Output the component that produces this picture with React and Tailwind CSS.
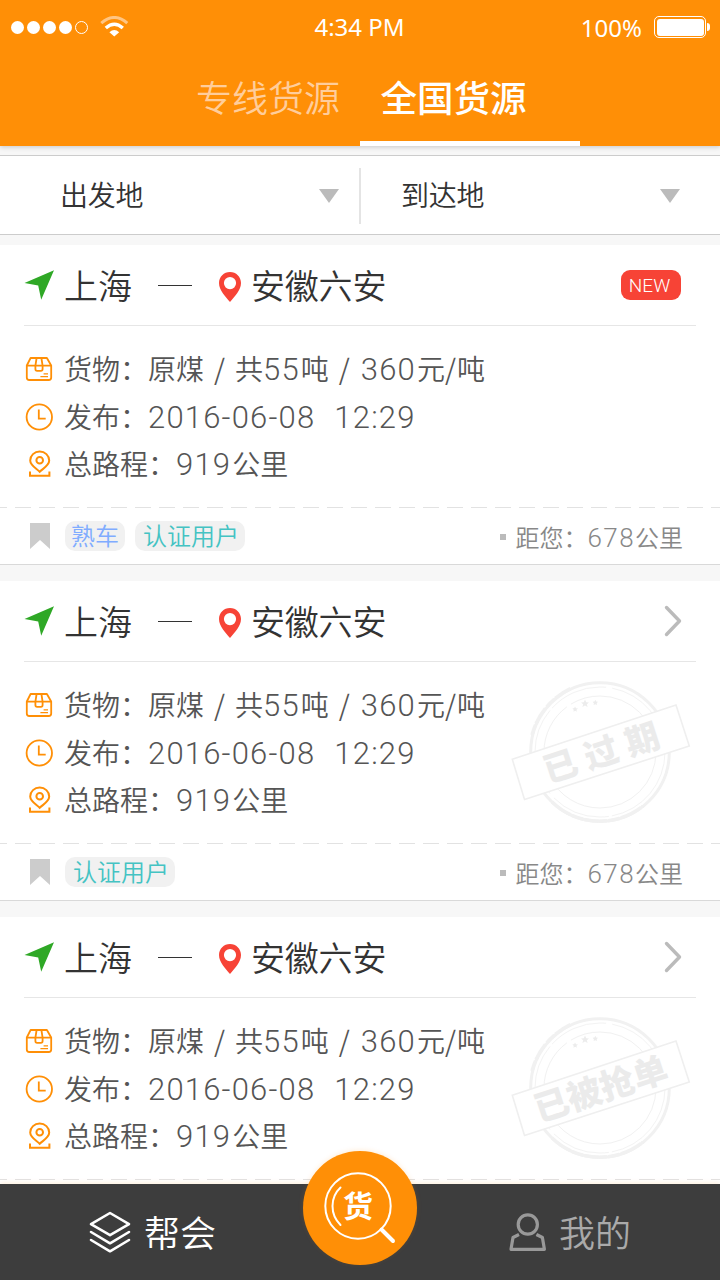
import React from 'react';

const ORDERS = [
  { id: 1, isNew: true, familiar: true, stamp: null, distance: '678' },
  { id: 2, isNew: false, familiar: false, stamp: '已过期', distance: '678' },
  { id: 3, isNew: false, familiar: false, stamp: '已被抢单', distance: null },
];

function StatusBar() {
  return (
    <div className="flex h-[54px] items-center font-['Noto_Sans',sans-serif] text-[24px] leading-none">
      <div className="flex flex-1 items-center pl-[11px]">
        <div className="flex gap-[3px]">
          {[0, 1, 2, 3].map(i => (
            <span key={i} className="h-[13px] w-[13px] rounded-full bg-white" />
          ))}
          <span className="h-[13px] w-[13px] rounded-full border border-white" />
        </div>
        <svg className="ml-3 h-[22px] w-[30px]" viewBox="0 0 30 22" fill="none">
          <path d="M1.3 7.2Q14.3-4.2 27.3 7.2" stroke="#ffc583" strokeWidth="3" />
          <path d="M5.8 12Q14.3 4.4 22.8 12" stroke="#fff" strokeWidth="3.4" />
          <path d="M9.4 16.2Q14.3 12 19.2 16.2L14.3 20.5Z" fill="#fff" />
        </svg>
      </div>
      <span className="-ml-0.5 font-[380]">4:34 PM</span>
      <div className="flex flex-1 items-center justify-end pr-[10px]">
        <span className="pt-0.5 font-[380]">100%</span>
        <div className="ml-3 h-[22px] w-[52px] rounded-[5px] border border-white p-[1.5px]">
          <div className="h-full w-full rounded-[3px] bg-white" />
        </div>
        <span className="ml-px h-2 w-[3px] rounded-r-full bg-white" />
      </div>
    </div>
  );
}

function FilterItem({ label, className }) {
  return (
    <div className={`flex flex-1 items-center justify-between ${className}`}>
      <span className="pb-0.5 text-[28px] leading-none tracking-[-0.3px]">{label}</span>
      <svg className="mt-px h-[14px] w-5" viewBox="0 0 20 14">
        <path d="M0 0H20L10 14Z" fill="#bbb" />
      </svg>
    </div>
  );
}

function ArrowIcon() {
  return (
    <svg className="h-[30px] w-[31px]" viewBox="0 0 31 30">
      <path d="M30 .3 17.2 29.7 14.2 15.5 .5 13Z" fill="#2fa826" />
    </svg>
  );
}

function PinIcon() {
  return (
    <svg className="mt-[3px] h-[30px] w-[22px]" viewBox="0 0 22 30">
      <path fillRule="evenodd" d="M11 0C17.1 0 22 4.9 22 11 22 18.2 15.5 24.5 11 30 6.5 24.5 0 18.2 0 11 0 4.9 4.9 0 11 0ZM11 5a6.1 6.1 0 1 0 0 12.2A6.1 6.1 0 0 0 11 5Z" fill="#f74336" />
    </svg>
  );
}

function BoxIcon() {
  return (
    <svg className="h-7 w-7" viewBox="0 0 28 28" fill="none" stroke="#ff8f06" strokeWidth="1.8" strokeLinejoin="round">
      <path d="M1.8 10.5 5.6 3H21.9L26.2 10.5V22.5Q26.2 25 23.7 25H4.3Q1.8 25 1.8 22.5ZM1.8 10.7H26.2M11.6 3 10.4 10.7V14Q10.4 15.8 12.1 15.8H15.9Q17.6 15.8 17.6 14V10.7L16.4 3" />
      <path d="M18.6 18.8H23M15.4 21.6H23" strokeWidth="1.3" />
    </svg>
  );
}

function ClockIcon() {
  return (
    <svg className="h-7 w-7" viewBox="0 0 28 28" fill="none" stroke="#ff8f06" strokeWidth="1.8">
      <circle cx="14.3" cy="14" r="12.7" />
      <path d="M13.8 6.6V15.6H20.7" />
    </svg>
  );
}

function RouteIcon() {
  return (
    <svg className="h-7 w-7" viewBox="0 0 28 28" fill="none" stroke="#ff8f06" strokeWidth="2">
      <path d="M14.7 21.8C11.5 18.5 5.2 15.5 5.2 10.5A9.5 9 0 0 1 24.2 10.5C24.2 15.5 18 18.5 14.7 21.8Z" />
      <circle cx="14.7" cy="10.3" r="3.3" />
      <path d="M5 21.5V25.8H24.4V21.5" />
    </svg>
  );
}

function Stamp({ text }) {
  return (
    <svg className="absolute right-[28px] top-[14px] h-[150px] w-[182px]" viewBox="510 676 182 150" fill="none">
      <circle cx="600" cy="752" r="69.3" stroke="#f1f1f1" strokeWidth="3" />
      <circle cx="600" cy="752" r="65" stroke="#f3f3f3" strokeWidth="1" strokeDasharray="90 3 60 6" />
      <circle cx="600" cy="752" r="56" stroke="#f1f1f1" strokeWidth="1" strokeDasharray="150 8 70 5" />
      <path d="M552 802A69 69 0 0 0 643 806" stroke="#f1f1f1" strokeWidth="3.5" strokeDasharray="23 1 12 1" />
      <path d="M532 735A71 71 0 0 1 572 688" stroke="#f1f1f1" strokeWidth="3.5" strokeDasharray="11 1 18 2" />
      <g fill="#ececec">
        <path d="M585 699.5 586.2 702.3 589 702.5 586.8 704.3 587.6 707 585 705.5 582.4 707 583.2 704.3 581 702.5 583.8 702.3Z" />
        <path d="M575 706.5 576 708.2 578 708.4 576.5 709.8 576.9 711.7 575.2 710.8 573.5 711.8 573.7 709.8 572.4 708.4 574.3 708.1Z" />
        <path d="M595.3 699.8 596.2 701.6 598 701.8 596.7 703.2 597 705 595.3 704.2 593.6 705 593.9 703.2 592.6 701.8 594.5 701.6Z" />
      </g>
      <path d="M512.3 759.3 676 705 689.3 746 524.5 799.5Z" fill="#fff" stroke="#efefef" strokeWidth="1.6" />
      <text
        transform="translate(601.5 752) rotate(-18)"
        x={text.length === 3 ? 4 : -1}
        y="13"
        textAnchor="middle"
        fill="#ebebeb"
        className={`font-['Noto_Sans_CJK_SC',sans-serif] font-black ${text.length === 3 ? 'text-[34px] tracking-[9px]' : 'text-[34.5px]'}`}
      >
        {text}
      </text>
    </svg>
  );
}

function Num({ children }) {
  return <span className="mr-px font-['Roboto',sans-serif] text-[31px] tracking-[1.2px]">{children}</span>;
}

function OrderCard({ order }) {
  return (
    <section className="mb-4 flex h-80 shrink-0 flex-col border-b border-[#d9d9d9] bg-white">
      <div className="mx-6 flex h-[81px] shrink-0 items-center border-b border-[#e6e6e6] text-[34px] leading-none">
        <ArrowIcon />
        <span className="ml-[9px] pb-px">上海</span>
        <span className="ml-[26px] mr-[27px] h-px w-[34px] bg-[#333]" />
        <PinIcon />
        <span className="ml-[10px] pb-px tracking-[-0.2px]">安徽六安</span>
        {order.isNew ? (
          <span className="ml-auto mr-[15px] flex h-[30px] w-[60px] items-center justify-center rounded-[9px] bg-[#f74336] pr-[3px] font-['Roboto',sans-serif] text-[19px] text-white">
            NEW
          </span>
        ) : (
          <svg className="ml-auto mr-[14px] h-8 w-[18px]" viewBox="0 0 18 32" fill="none" stroke="#bbb" strokeWidth="3.4" strokeLinecap="round" strokeLinejoin="round">
            <path d="M2.5 2.5 15.5 16 2.5 29.5" />
          </svg>
        )}
      </div>

      <div className="relative h-[181px] shrink-0 pl-[25px] pt-[19px] text-[28px] leading-none text-[#555]">
        {order.stamp && <Stamp text={order.stamp} />}
        <div className="relative flex h-12 items-center gap-[11px] whitespace-pre">
          <BoxIcon />
          <p>货物：原煤<span className="mx-[10px]">/</span>共<Num>55</Num>吨<span className="ml-[10px] mr-[11px]">/</span><Num>360</Num>元<span className="mr-px">/</span>吨</p>
        </div>
        <div className="relative flex h-12 items-center gap-[11px]">
          <ClockIcon />
          <p>发布：<Num>2016-06-08</Num><span className="ml-[18px]"><Num>12:29</Num></span></p>
        </div>
        <div className="relative flex h-[45px] items-center gap-[11px]">
          <RouteIcon />
          <p className="pt-px">总路程：<Num>919</Num>公里</p>
        </div>
      </div>

      <div className="h-px shrink-0 bg-[repeating-linear-gradient(to_right,#e2e2e2_0_7px,transparent_7px_15px,#e2e2e2_15px_24px)]" />

      {order.distance && (
        <div className="flex flex-1 items-center pl-[30px] pr-[37px] text-2xl leading-none">
          <svg className="h-[26px] w-5" viewBox="0 0 20 26">
            <path d="M0 0H20V26L10 17 0 26Z" fill="#ccc" />
          </svg>
          <div className="ml-[15px] flex gap-2.5">
            {order.familiar && (
              <span className="flex h-[30px] w-[60px] items-center justify-center rounded-[10px] bg-[#f1f1f1] pb-0.5 text-[#80acff]">熟车</span>
            )}
            <span className="flex h-[30px] w-[110px] items-center justify-center rounded-[10px] bg-[#f1f1f1] pb-0.5 pl-0.5 text-[#44c3c3]">认证用户</span>
          </div>
          <span className="ml-auto mr-[10px] mt-0.5 h-1.5 w-1.5 bg-[#bbb]" />
          <p className="pt-[3px] text-[#888]">距您：<span className="font-['Roboto',sans-serif] text-[26px] tracking-[1.4px]">{order.distance}</span>公里</p>
        </div>
      )}
    </section>
  );
}

function BottomNav() {
  return (
    <nav className="relative z-10 flex h-24 shrink-0 items-center justify-between bg-[#3d3d3d] pl-[89px] pr-[89px] text-4xl leading-none text-white shadow-[0_-1px_5px_rgba(255,143,6,0.15)]">
      <div className="flex items-center gap-[13px]">
        <svg className="h-[42px] w-[42px]" viewBox="0 0 42 42" fill="none" stroke="#fff" strokeWidth="2.6" strokeLinejoin="round" strokeLinecap="round">
          <path d="M21 2 40 13.2 21 24.2 2 13.2Z" />
          <path d="M2 21 21 32.3 40 21M2 29 21 40.3 40 29" />
        </svg>
        <span className="pb-0.5">帮会</span>
      </div>
      <div className="absolute -top-[33px] left-[303px] h-[114px] w-[114px] rounded-full bg-[#ff8f06] shadow-[0_-1px_5px_rgba(255,143,6,0.15)]">
        <svg className="h-full w-full" viewBox="0 0 114 114" fill="none" stroke="#fff" strokeLinecap="round">
          <circle cx="55" cy="55" r="32.7" strokeWidth="2" />
          <path d="M37.5 36.5Q29.5 44 29.5 55T37.5 74" strokeWidth="2" />
          <path d="M78.5 78.5 90 90" strokeWidth="4" />
          <text x="55" y="66" textAnchor="middle" fill="#fff" stroke="none" className="text-[30px] font-bold">货</text>
        </svg>
      </div>
      <div className="flex items-center gap-[13px] text-[#aaa]">
        <svg className="h-[38px] w-[37px]" viewBox="0 0 37 38" fill="none" stroke="#999" strokeWidth="3.2" strokeLinejoin="round">
          <circle cx="18.8" cy="11.5" r="9.6" />
          <path d="M10 21.5 4 24.5 2 36.3H35.4L33.4 24.5 27.4 21.5" />
        </svg>
        <span className="pb-0.5">我的</span>
      </div>
    </nav>
  );
}

export default function App() {
  return (
    <div className="flex h-[1280px] w-[720px] flex-col overflow-hidden bg-[#f7f7f7] font-['Noto_Sans_CJK_SC',sans-serif] font-[350] text-[#333]">
      <header className="relative z-10 h-[146px] shrink-0 bg-[#ff8f06] text-white shadow-[0_1px_5px_rgba(0,0,0,0.2)]">
        <StatusBar />
        <div className="flex h-[92px] justify-center leading-none">
          <button className="w-[220px] pb-2 pl-[36px] text-4xl font-[350] text-[#ffcd9b]">专线货源</button>
          <button className="w-[220px] border-b-[5px] border-white pr-[33px] text-[36.5px] font-medium">全国货源</button>
        </div>
      </header>

      <div className="mb-[10px] mt-[9px] flex h-20 shrink-0 items-center border-y border-[#ccc] bg-white">
        <FilterItem label="出发地" className="pl-[60px] pr-[21px]" />
        <span className="-ml-px mt-0.5 h-14 w-0.5 bg-[#e4e4e4]" />
        <FilterItem label="到达地" className="pl-[40px] pr-[40px]" />
      </div>

      <main className="flex min-h-0 flex-1 flex-col overflow-hidden">
        {ORDERS.map(order => (
          <OrderCard key={order.id} order={order} />
        ))}
      </main>

      <BottomNav />
    </div>
  );
}
